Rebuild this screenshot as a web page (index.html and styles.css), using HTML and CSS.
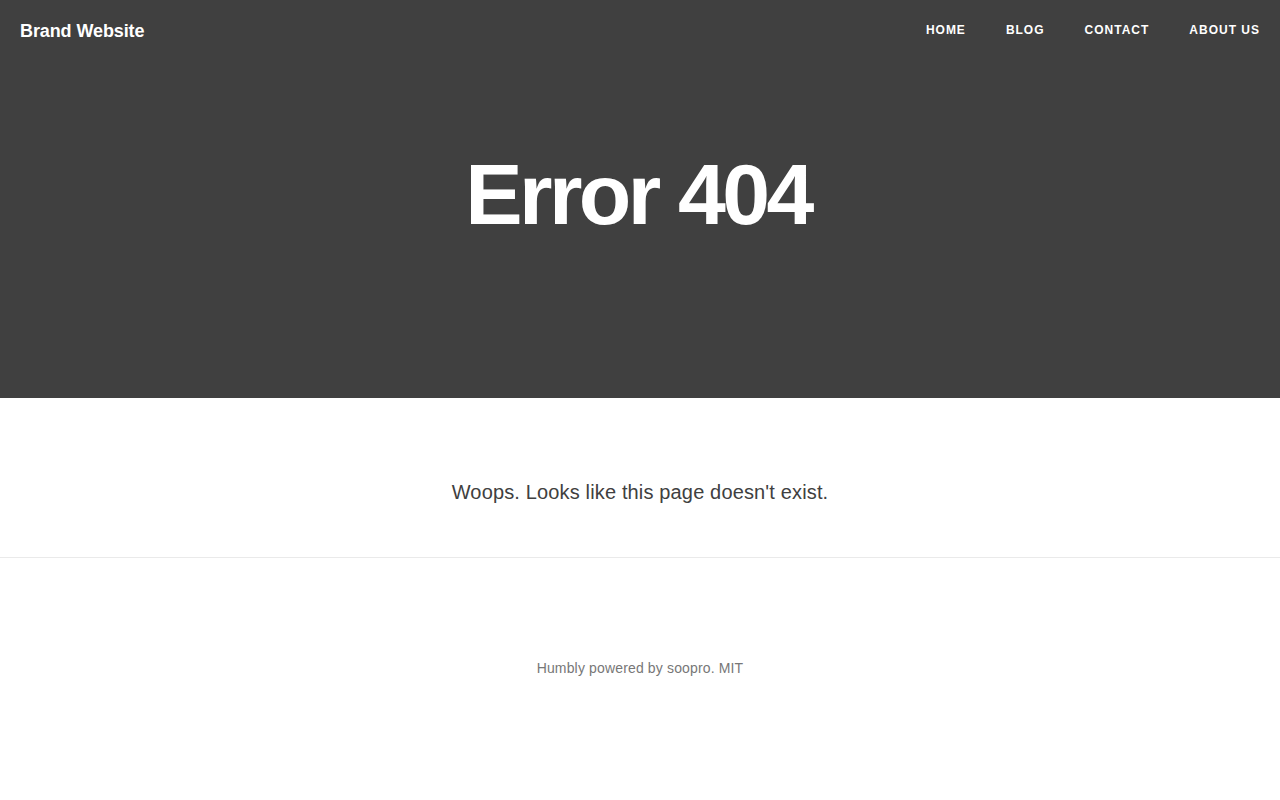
FILE: index.html
```html
<!DOCTYPE html>
<html lang="en">
<head>
<meta charset="utf-8">
<title>Error 404</title>
<link rel="stylesheet" href="styles.css">
</head>
<body>
<header class="hero">
  <nav class="topbar">
    <a class="brand" href="#">Brand Website</a>
    <ul class="menu">
      <li><a href="#">Home</a></li>
      <li><a href="#">Blog</a></li>
      <li><a href="#">Contact</a></li>
      <li><a href="#">About us</a></li>
    </ul>
  </nav>
  <div class="hero-body">
    <h1 class="title">Error 404</h1>
  </div>
</header>
<main class="content">
  <p class="message">Woops. Looks like this page doesn't exist.</p>
</main>
<footer class="footer">
  <p>Humbly powered by soopro. MIT</p>
</footer>
</body>
</html>
```
FILE: styles.css
```css
* { box-sizing: border-box; }
html, body { margin: 0; padding: 0; }
body {
  font-family: "Liberation Sans", Arial, Helvetica, sans-serif;
  background: #fff;
  color: #404040;
}
a { text-decoration: none; color: inherit; }

.hero {
  background: #404040;
  color: #fff;
  height: 398px;
  display: flex;
  flex-direction: column;
}
.topbar {
  display: flex;
  justify-content: space-between;
  align-items: center;
  height: 60px;
  padding: 0 20px;
}
.brand {
  font-size: 18px;
  font-weight: 700;
  letter-spacing: -0.1px;
  line-height: 22px;
  padding-top: 1px;
}
.menu {
  list-style: none;
  margin: 0;
  padding: 0;
  display: flex;
  gap: 40px;
}
.menu a {
  font-size: 12px;
  font-weight: 700;
  text-transform: uppercase;
  letter-spacing: 1px;
  display: block;
}
.hero-body {
  display: flex;
  justify-content: center;
  padding-top: 84px;
}
.title {
  margin: 0 4px 0 0;
  font-size: 86px;
  font-weight: 700;
  line-height: 100px;
  letter-spacing: -3.6px;
}
.content {
  height: 160px;
  padding-top: 80px;
  border-bottom: 1px solid #eaeaea;
  text-align: center;
}
.message {
  margin: 0;
  font-size: 20px;
  line-height: 28px;
  letter-spacing: 0.15px;
  color: #404040;
}
.footer {
  height: 241px;
  padding-top: 101px;
  text-align: center;
}
.footer p {
  margin: 0;
  font-size: 14px;
  line-height: 18px;
  letter-spacing: 0.15px;
  color: #777;
}
```
